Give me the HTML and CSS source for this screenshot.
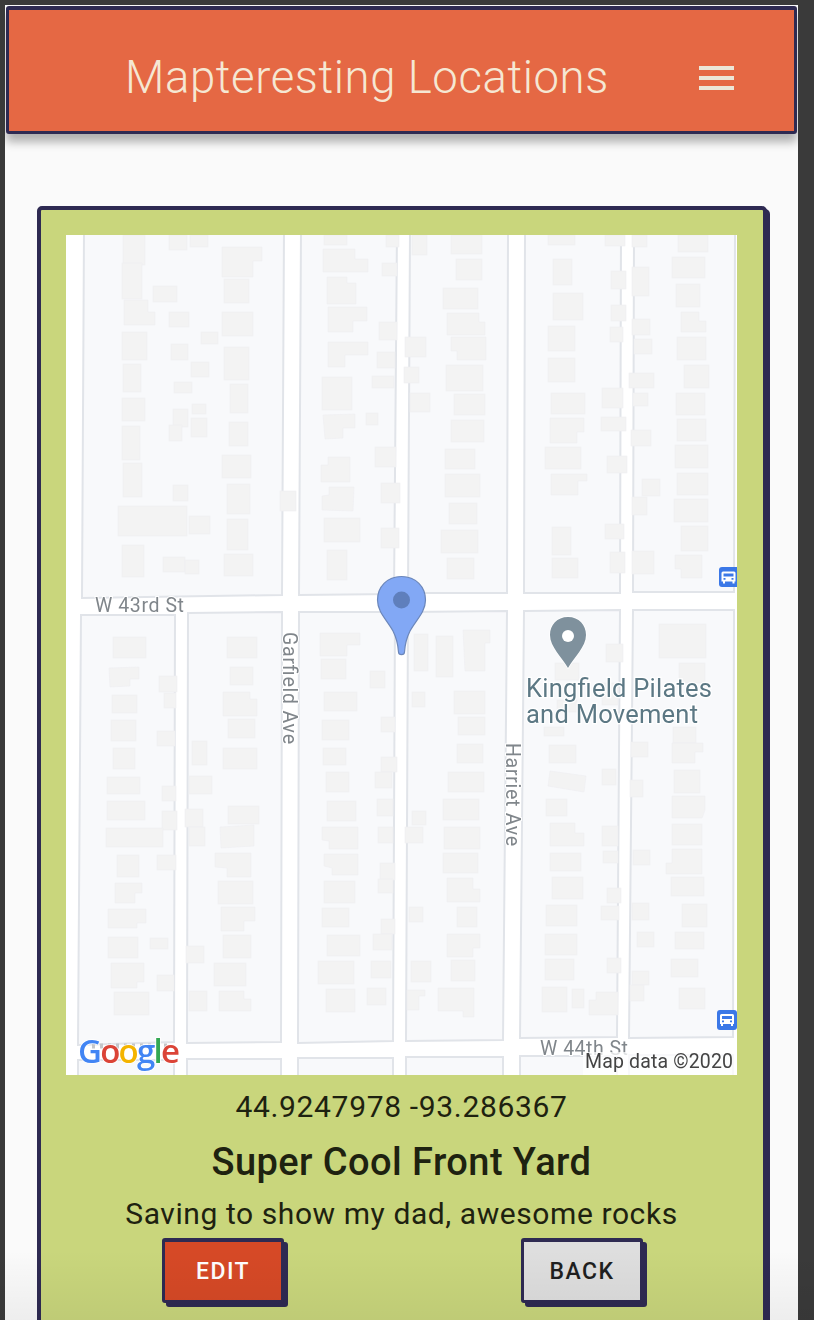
FILE: index.html
```html
<!DOCTYPE html>
<html lang="en">
<head>
<meta charset="utf-8">
<title>Mapteresting Locations</title>
<link rel="stylesheet" href="styles.css">
</head>
<body>
<div class="page">
  <header class="topbar">
    <h1 class="brand">Mapteresting Locations</h1>
    <div class="burger"><span></span><span></span><span></span></div>
  </header>
  <main class="card">
    <svg class="map" viewBox="66 235 671 840" xmlns="http://www.w3.org/2000/svg">
      <rect x="66" y="235" width="671" height="840" fill="#fff"/>
      <g class="blocks">
        <polygon points="84,230 284,230 282,595 82,598"/>
        <polygon points="301,230 397,230 394,594 299,595"/>
        <polygon points="410,230 508,230 507,593 408,593"/>
        <polygon points="525,230 621,230 620,593 524,593"/>
        <polygon points="634,230 735,230 734,592 633,592"/>
        <polygon points="81,615 175,615 174,1042 78,1045"/>
        <polygon points="188,613 282,612 281,1042 187,1043"/>
        <polygon points="299,612 395,612 393,1041 298,1043"/>
        <polygon points="408,612 507,611 503,1040 406,1041"/>
        <polygon points="524,611 620,610 617,1037 520,1038"/>
        <polygon points="633,610 734,610 733,1037 629,1038"/>
        <polygon points="78,1060 174,1060 174,1080 78,1080"/>
        <polygon points="187,1059 281,1059 281,1080 187,1080"/>
        <polygon points="298,1058 393,1058 393,1080 298,1080"/>
        <polygon points="406,1057 503,1057 503,1080 406,1080"/>
        <polygon points="520,1056 617,1056 617,1080 520,1080"/>
        <polygon points="629,1055 733,1055 733,1080 629,1080"/>
      </g>
      <g class="buildings">
        <rect x="123" y="235" width="22" height="30"/><rect x="122" y="263" width="20" height="36"/><polygon points="124,300 148,300 148,312 155,312 155,325 124,325"/><rect x="122" y="332" width="25" height="28"/><rect x="123" y="364" width="18" height="28"/><rect x="122" y="398" width="23" height="23"/><rect x="122" y="426" width="18" height="34"/><rect x="123" y="463" width="19" height="34"/><rect x="118" y="506" width="69" height="30"/><rect x="122" y="545" width="22" height="32"/>
        <rect x="169" y="235" width="18" height="15"/><rect x="190" y="235" width="18" height="12"/><rect x="153" y="286" width="24" height="16"/><rect x="169" y="312" width="20" height="15"/><rect x="201" y="332" width="17" height="12"/><rect x="171" y="344" width="17" height="16"/><rect x="191" y="362" width="18" height="15"/><rect x="174" y="382" width="18" height="11"/><rect x="192" y="404" width="14" height="10"/><rect x="173" y="409" width="15" height="18"/><rect x="169" y="425" width="13" height="16"/><rect x="191" y="418" width="16" height="19"/><rect x="173" y="485" width="15" height="16"/><rect x="189" y="516" width="21" height="18"/><rect x="163" y="557" width="22" height="15"/><rect x="185" y="560" width="14" height="14"/>
        <polygon points="222,247 262,247 262,261 253,261 253,277 222,277"/><rect x="224" y="279" width="25" height="24"/><rect x="222" y="312" width="31" height="24"/><rect x="224" y="347" width="25" height="33"/><rect x="230" y="384" width="18" height="29"/><rect x="229" y="422" width="19" height="24"/><rect x="222" y="455" width="29" height="23"/><rect x="227" y="484" width="23" height="30"/><rect x="227" y="519" width="21" height="31"/><rect x="224" y="554" width="29" height="22"/><rect x="280" y="491" width="16" height="20"/>
        <rect x="324" y="235" width="23" height="10"/><rect x="386" y="235" width="13" height="12"/><polygon points="323,249 355,249 355,259 368,259 368,272 323,272"/><polygon points="327,277 347,277 347,283 356,283 356,304 327,304"/><polygon points="328,307 367,307 367,321 353,321 353,332 328,332"/><polygon points="328,342 368,342 368,355 345,355 345,367 328,367"/><rect x="322" y="377" width="30" height="33"/><polygon points="323,415 355,414 355,428 343,428 343,438 325,439"/><polygon points="328,457 350,457 350,482 321,482 321,465 328,465"/><polygon points="329,487 354,487 353,511 322,510 322,496 329,495"/><rect x="324" y="518" width="36" height="24"/><rect x="327" y="550" width="20" height="30"/>
        <rect x="382" y="263" width="15" height="13"/><rect x="379" y="322" width="18" height="18"/><rect x="377" y="352" width="18" height="16"/><rect x="372" y="376" width="22" height="12"/><rect x="366" y="413" width="12" height="12"/><rect x="375" y="447" width="21" height="20"/><rect x="381" y="483" width="19" height="20"/><rect x="381" y="528" width="18" height="20"/>
        <rect x="412" y="235" width="15" height="20"/><rect x="451" y="235" width="31" height="19"/><rect x="456" y="259" width="26" height="21"/><rect x="443" y="288" width="35" height="21"/><polygon points="447,313 479,313 479,322 485,322 485,335 447,335"/><polygon points="451,337 486,337 486,360 457,360 457,351 451,351"/><rect x="405" y="337" width="21" height="20"/><rect x="404" y="367" width="15" height="16"/><rect x="410" y="393" width="20" height="19"/><rect x="446" y="365" width="37" height="26"/><rect x="454" y="394" width="31" height="21"/><rect x="451" y="420" width="33" height="22"/><rect x="445" y="449" width="30" height="20"/><rect x="445" y="474" width="35" height="23"/><rect x="449" y="503" width="28" height="21"/><rect x="441" y="530" width="37" height="23"/><rect x="447" y="558" width="27" height="21"/>
        <rect x="548" y="235" width="27" height="10"/><rect x="605" y="235" width="20" height="11"/><rect x="553" y="259" width="19" height="26"/><rect x="553" y="293" width="30" height="27"/><rect x="611" y="271" width="15" height="18"/><rect x="611" y="305" width="15" height="16"/><rect x="610" y="327" width="13" height="15"/><rect x="548" y="326" width="27" height="25"/><rect x="548" y="358" width="27" height="24"/><rect x="551" y="393" width="34" height="21"/><rect x="602" y="388" width="21" height="20"/><rect x="601" y="417" width="25" height="14"/><polygon points="550,418 584,418 584,432 577,432 577,443 550,443"/><rect x="545" y="447" width="36" height="22"/><rect x="607" y="456" width="20" height="17"/><polygon points="551,474 587,474 587,481 578,481 578,495 551,495"/><rect x="605" y="524" width="19" height="15"/><rect x="552" y="527" width="19" height="28"/><rect x="552" y="558" width="26" height="20"/><rect x="610" y="552" width="15" height="21"/>
        <rect x="632" y="235" width="15" height="12"/><rect x="678" y="235" width="30" height="17"/><rect x="672" y="257" width="33" height="21"/><rect x="632" y="267" width="17" height="29"/><rect x="676" y="284" width="24" height="23"/><polygon points="681,312 699,312 699,321 706,321 706,332 681,332"/><rect x="632" y="319" width="18" height="16"/><rect x="634" y="339" width="18" height="15"/><rect x="677" y="337" width="29" height="23"/><rect x="684" y="365" width="25" height="23"/><rect x="629" y="373" width="25" height="15"/><rect x="633" y="393" width="15" height="13"/><rect x="676" y="393" width="29" height="22"/><rect x="677" y="419" width="29" height="22"/><rect x="631" y="430" width="20" height="16"/><rect x="675" y="445" width="33" height="23"/><rect x="677" y="473" width="31" height="22"/><rect x="642" y="479" width="18" height="17"/><rect x="632" y="497" width="15" height="18"/><rect x="674" y="499" width="34" height="23"/><rect x="681" y="526" width="27" height="25"/><rect x="632" y="551" width="22" height="23"/><polygon points="675,555 702,555 702,578 681,578 681,569 675,569"/>
        <rect x="113" y="637" width="33" height="21"/><polygon points="109,668 139,667 139,679 130,679 130,686 110,687"/><rect x="112" y="695" width="25" height="18"/><rect x="111" y="720" width="25" height="21"/><rect x="113" y="748" width="22" height="21"/><rect x="107" y="777" width="33" height="17"/><rect x="107" y="801" width="38" height="19"/><rect x="159" y="676" width="18" height="16"/><rect x="164" y="693" width="12" height="15"/><rect x="157" y="731" width="18" height="15"/><rect x="162" y="786" width="14" height="15"/><rect x="162" y="811" width="15" height="19"/><rect x="106" y="828" width="57" height="19"/><rect x="117" y="855" width="22" height="22"/><rect x="157" y="855" width="19" height="15"/><polygon points="115,883 142,883 142,893 135,893 135,903 115,903"/><polygon points="108,909 146,909 146,923 137,923 137,928 108,928"/><rect x="108" y="937" width="30" height="21"/><rect x="150" y="938" width="18" height="11"/><polygon points="111,963 144,963 144,982 137,982 137,988 111,988"/><rect x="157" y="975" width="17" height="16"/><rect x="114" y="992" width="35" height="23"/>
        <rect x="227" y="637" width="30" height="21"/><rect x="230" y="667" width="23" height="18"/><polygon points="223,692 250,692 250,699 257,699 257,716 223,716"/><rect x="228" y="719" width="27" height="19"/><rect x="223" y="748" width="34" height="21"/><rect x="192" y="741" width="15" height="24"/><rect x="189" y="776" width="23" height="18"/><rect x="228" y="806" width="31" height="18"/><rect x="185" y="809" width="18" height="18"/><polygon points="220,827 254,825 254,846 221,848"/><rect x="189" y="827" width="16" height="19"/><polygon points="215,853 251,853 251,877 227,877 227,868 215,867"/><rect x="218" y="881" width="35" height="23"/><polygon points="221,907 255,907 255,921 244,921 244,931 221,931"/><rect x="223" y="935" width="28" height="23"/><rect x="186" y="946" width="18" height="17"/><rect x="214" y="963" width="32" height="23"/><rect x="189" y="991" width="18" height="20"/><polygon points="219,991 244,991 244,999 251,999 251,1011 219,1011"/>
        <polygon points="320,633 360,633 360,645 347,645 347,656 320,656"/><rect x="321" y="659" width="25" height="20"/><rect x="324" y="692" width="33" height="19"/><rect x="322" y="720" width="27" height="20"/><rect x="323" y="748" width="23" height="17"/><rect x="326" y="772" width="23" height="20"/><rect x="327" y="801" width="29" height="20"/><rect x="370" y="671" width="15" height="17"/><rect x="381" y="717" width="14" height="15"/><rect x="381" y="757" width="16" height="15"/><rect x="375" y="772" width="17" height="16"/><rect x="377" y="799" width="16" height="17"/><polygon points="322,827 358,827 358,849 329,849 329,841 322,840"/><polygon points="324,854 358,854 358,875 332,875 332,868 324,866"/><rect x="324" y="881" width="31" height="22"/><rect x="322" y="908" width="27" height="19"/><rect x="327" y="935" width="33" height="21"/><rect x="318" y="961" width="36" height="23"/><rect x="326" y="989" width="29" height="23"/><rect x="378" y="827" width="15" height="16"/><rect x="380" y="863" width="15" height="17"/><rect x="378" y="879" width="15" height="14"/><rect x="381" y="919" width="14" height="15"/><rect x="373" y="934" width="19" height="16"/><rect x="371" y="961" width="20" height="17"/><rect x="367" y="988" width="19" height="17"/>
        <rect x="414" y="634" width="14" height="37"/><rect x="436" y="636" width="17" height="41"/><polygon points="463,630 490,630 490,643 485,643 485,671 465,671"/><rect x="412" y="692" width="13" height="15"/><rect x="454" y="691" width="31" height="23"/><rect x="458" y="717" width="27" height="18"/><rect x="457" y="744" width="26" height="19"/><rect x="448" y="772" width="36" height="20"/><rect x="443" y="799" width="36" height="21"/><rect x="412" y="811" width="14" height="14"/><rect x="405" y="827" width="18" height="16"/><rect x="444" y="827" width="36" height="22"/><rect x="443" y="853" width="35" height="20"/><polygon points="447,878 473,878 473,889 480,889 480,902 447,902"/><rect x="457" y="907" width="20" height="20"/><rect x="409" y="907" width="14" height="15"/><polygon points="447,934 480,934 480,948 473,948 473,957 447,957"/><rect x="451" y="960" width="24" height="21"/><rect x="411" y="961" width="20" height="21"/><polygon points="438,988 474,988 474,1017 463,1017 463,1011 438,1011"/><polygon points="407,990 425,990 425,996 419,996 419,1010 407,1010"/>
        <rect x="606" y="644" width="17" height="18"/><rect x="555" y="663" width="24" height="17"/><rect x="602" y="683" width="16" height="22"/><rect x="557" y="700" width="20" height="12"/><rect x="544" y="727" width="20" height="9"/><rect x="549" y="745" width="27" height="18"/><polygon points="550,771 586,776 584,792 548,786"/><rect x="602" y="769" width="14" height="16"/><rect x="546" y="799" width="21" height="17"/><polygon points="550,823 575,823 575,833 584,833 584,846 550,846"/><rect x="602" y="826" width="16" height="20"/><rect x="603" y="851" width="15" height="12"/><rect x="550" y="853" width="31" height="18"/><rect x="552" y="877" width="31" height="22"/><rect x="607" y="888" width="14" height="15"/><rect x="546" y="905" width="31" height="21"/><rect x="601" y="906" width="18" height="14"/><rect x="545" y="934" width="32" height="21"/><rect x="545" y="959" width="29" height="21"/><rect x="607" y="958" width="14" height="15"/><rect x="542" y="987" width="25" height="25"/><rect x="572" y="989" width="12" height="19"/><polygon points="596,992 618,992 618,1015 589,1015 589,1000 596,1000"/>
        <rect x="659" y="624" width="47" height="34"/><rect x="679" y="663" width="26" height="20"/><rect x="630" y="780" width="13" height="17"/><rect x="631" y="742" width="17" height="15"/><rect x="673" y="727" width="23" height="16"/><polygon points="672,743 703,743 703,752 695,752 695,763 672,763"/><rect x="674" y="770" width="26" height="23"/><polygon points="672,796 705,796 705,810 702,818 672,818"/><rect x="672" y="824" width="30" height="21"/><polygon points="672,849 702,849 702,874 666,874 666,863 672,863"/><rect x="671" y="877" width="33" height="19"/><rect x="682" y="904" width="25" height="23"/><rect x="632" y="903" width="17" height="17"/><rect x="633" y="850" width="17" height="15"/><rect x="637" y="932" width="17" height="15"/><rect x="675" y="932" width="29" height="17"/><rect x="671" y="959" width="27" height="18"/><rect x="632" y="971" width="17" height="14"/><rect x="630" y="985" width="14" height="16"/><rect x="679" y="988" width="26" height="21"/>
      </g>
      <path class="ghost-label" d="M92 1046H170"/>
      <text class="road" x="95" y="612" textLength="89">W 43rd St</text>
      <text class="road" transform="translate(283 632) rotate(90)" textLength="112">Garfield Ave</text>
      <text class="road" transform="translate(506 743) rotate(90)" textLength="103">Harriet Ave</text>
      <text class="road" x="540" y="1055" textLength="88">W 44th St</text>
      <g class="poi-pin">
        <path d="M568 617C557 617 550 625 550 635C550 647 562 657 568 668C574 657 586 647 586 635C586 625 579 617 568 617Z"/>
        <circle class="poi-hole" cx="568" cy="636" r="6"/>
      </g>
      <text class="poi" x="526" y="697" textLength="186">Kingfield Pilates</text>
      <text class="poi" x="526" y="723" textLength="172">and Movement</text>
      <g class="marker">
        <path d="M401.5 576.5C387 576.5 377.5 587 377.5 600C377.5 612 387 620 393 631C396 637 398 644 398.5 652C398.7 655.500 404.300 655.500 404.500 652C405 644 407 637 410 631C416 620 425.500 612 425.500 600C425.500 587 416 576.500 401.500 576.500Z"/>
        <circle class="marker-dot" cx="401.500" cy="600" r="8.500"/>
      </g>
      <g class="bus">
        <rect class="bus-bg" x="719" y="567" width="20" height="20" rx="3"/>
        <path class="bus-glyph" d="M723 571.500H734Q735.500 571.500 735.500 573V581.500H734.500V583.500H732.500V581.500H725V583.500H723V581.500H721.500V573Q721.500 571.500 723 571.500ZM723.500 573.500V576.500H733.500V573.500ZM723.500 578V579.800H725.500V578ZM731.500 578V579.800H733.500V578Z"/>
      </g>
      <g class="bus">
        <rect class="bus-bg" x="717" y="1010" width="20" height="20" rx="3"/>
        <path class="bus-glyph" d="M721.500 1014H732.500Q734 1014 734 1015.500V1024H733V1026H731V1024H723V1026H721V1024H720V1015.500Q720 1014 721.500 1014ZM722 1016V1019H732V1016ZM722 1020.500V1022.300H724V1020.500ZM730 1020.500V1022.300H732V1020.500Z"/>
      </g>
      <text class="google" x="78" y="1063" textLength="102"><tspan class="g-blue">G</tspan><tspan class="g-red">o</tspan><tspan class="g-yellow">o</tspan><tspan class="g-blue">g</tspan><tspan class="g-green">l</tspan><tspan class="g-red">e</tspan></text>
      <rect class="attrib-bg" x="583" y="1052" width="154" height="23"/>
      <text class="attrib" x="585" y="1068" textLength="148">Map data ©2020</text>
    </svg>
    <p class="coords">44.9247978 -93.286367</p>
    <h2 class="place">Super Cool Front Yard</h2>
    <p class="note">Saving to show my dad, awesome rocks</p>
    <div class="actions">
      <button class="btn btn-edit" type="button">EDIT</button>
      <button class="btn btn-back" type="button">BACK</button>
    </div>
  </main>
</div>
<div class="fade"></div>
</body>
</html>
```
FILE: styles.css
```css
* { box-sizing: border-box; }

html, body {
  margin: 0;
  height: 1320px;
  overflow: hidden;
}

body {
  background: #3a3a3a;
  font-family: Roboto, "Liberation Sans", sans-serif;
  color: #1e2210;
}

.page {
  margin: 5px 16px 0 5px;
  height: 1315px;
  overflow: hidden;
  background: #fafafa;
  padding-top: 1px;
}

.topbar {
  margin: 0 1px;
  height: 128px;
  padding: 14px 60px 0 116px;
  display: flex;
  align-items: center;
  background: #e56844;
  border: 3px solid #2e2a52;
  border-top-width: 4px;
  border-radius: 3px;
  box-shadow: 0 8px 10px rgba(0, 0, 0, .3);
}

.brand {
  margin: 0;
  font-size: 45.500px;
  font-weight: 300;
  line-height: 1;
  letter-spacing: .6px;
  white-space: nowrap;
  color: #f5e7d3;
}

.burger {
  margin-left: auto;
  display: flex;
  flex-direction: column;
  gap: 6px;
}

.burger span {
  display: block;
  width: 35px;
  height: 4px;
  background: #ece6d8;
}

.card {
  margin: 72px 31px 0 32px;
  padding: 25px 26px 60px 25px;
  background: #c9d67c;
  border: 4px solid #2e2a52;
  border-radius: 5px;
  box-shadow: 3px 3px 0 #2e2a52;
  text-align: center;
}

.map {
  display: block;
  width: 671px;
  height: 840px;
  filter: blur(.35px);
}

.blocks polygon {
  fill: #f8f9fb;
  stroke: #e1e4e9;
  stroke-width: 2;
}

.buildings rect,
.buildings polygon {
  fill: #f3f3f3;
  stroke: #efeff1;
  stroke-width: .6;
}

.ghost-label {
  fill: none;
  stroke: #c4c6c9;
  stroke-width: 5;
  stroke-dasharray: 3 5;
}

.road {
  font-family: Roboto, sans-serif;
  font-size: 19.500px;
  fill: #80868b;
  stroke: #fff;
  stroke-width: 2px;
  paint-order: stroke;
}

.poi {
  font-family: Roboto, sans-serif;
  font-size: 25.500px;
  fill: #5c7884;
  stroke: #fff;
  stroke-width: 2.500px;
  paint-order: stroke;
}

.poi-pin path {
  fill: #7f919d;
  stroke: #fff;
  stroke-width: 1.500px;
  paint-order: stroke;
}

.poi-hole { fill: #fff; }

.marker path {
  fill: #82a8f5;
  stroke: #6c87ba;
  stroke-width: 1.200px;
}

.marker-dot { fill: #5f7fbc; }

.bus-bg { fill: #3b78e7; }
.bus-glyph { fill: #fff; fill-rule: evenodd; }

.google {
  font-family: "Open Sans", Roboto, sans-serif;
  font-size: 33px;
  font-weight: 600;
  stroke: #fff;
  stroke-width: 1.500px;
  paint-order: stroke;
}

.g-blue { fill: #4285f4; }
.g-red { fill: #db4437; }
.g-yellow { fill: #f4b400; }
.g-green { fill: #34a853; }

.attrib-bg { fill: rgba(255, 255, 255, .75); }

.attrib {
  font-family: Roboto, sans-serif;
  font-size: 19.500px;
  fill: #444;
}

.coords {
  margin: 15px 0 0;
  font-size: 30px;
  letter-spacing: .67px;
  line-height: 34px;
}

.place {
  margin: 16px 0 0;
  font-size: 38px;
  font-weight: 500;
  letter-spacing: .43px;
  line-height: 44px;
}

.note {
  margin: 13px 0 0;
  font-size: 30px;
  letter-spacing: .58px;
  line-height: 34px;
}

.actions {
  margin-top: 7px;
  padding: 0 94px 0 96px;
  display: flex;
  justify-content: space-between;
}

.btn {
  width: 122px;
  height: 65px;
  padding: 0;
  font: 500 23px Roboto, sans-serif;
  letter-spacing: 1.400px;
  border: 3px solid #2e2a52;
  border-top-width: 4px;
  border-radius: 3px;
  box-shadow: 4px 4px 0 #2e2a52;
}

.btn-edit {
  background: #d64926;
  color: #fff;
}

.btn-back {
  background: #dedede;
  color: #1f1f1f;
}

.fade {
  position: absolute;
  left: 0;
  right: 0;
  bottom: 0;
  height: 70px;
  background: linear-gradient(rgba(0, 0, 0, 0), rgba(0, 0, 0, .05));
  pointer-events: none;
}
```
